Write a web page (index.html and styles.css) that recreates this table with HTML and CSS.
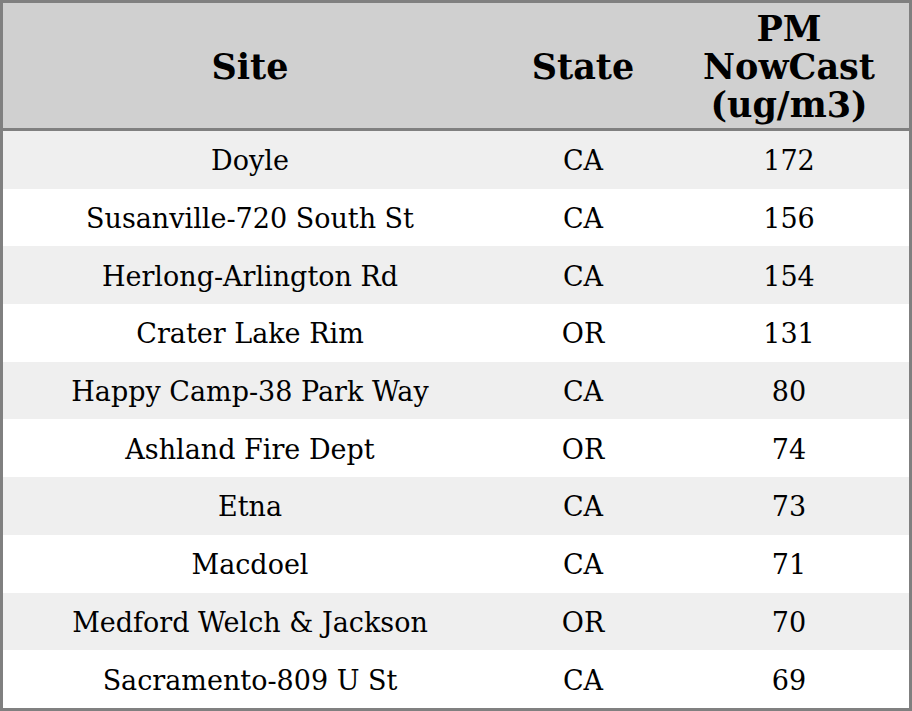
FILE: index.html
```html
<!DOCTYPE html>
<html>
<head>
<meta charset="utf-8">
<link rel="stylesheet" href="styles.css">
</head>
<body>
<table class="data">
  <colgroup>
    <col class="c-site">
    <col class="c-state">
    <col class="c-pm">
  </colgroup>
  <thead>
    <tr><th>Site</th><th>State</th><th>PM<br>NowCast<br>(ug/m3)</th></tr>
  </thead>
  <tbody>
    <tr><td>Doyle</td><td>CA</td><td>172</td></tr>
    <tr><td>Susanville-720 South St</td><td>CA</td><td>156</td></tr>
    <tr><td>Herlong-Arlington Rd</td><td>CA</td><td>154</td></tr>
    <tr><td>Crater Lake Rim</td><td>OR</td><td>131</td></tr>
    <tr><td>Happy Camp-38 Park Way</td><td>CA</td><td>80</td></tr>
    <tr><td>Ashland Fire Dept</td><td>OR</td><td>74</td></tr>
    <tr><td>Etna</td><td>CA</td><td>73</td></tr>
    <tr><td>Macdoel</td><td>CA</td><td>71</td></tr>
    <tr><td>Medford Welch &amp; Jackson</td><td>OR</td><td>70</td></tr>
    <tr><td>Sacramento-809 U St</td><td>CA</td><td>69</td></tr>
  </tbody>
</table>
</body>
</html>
```
FILE: styles.css
```css
html, body {
  margin: 0;
  padding: 0;
  background: #ffffff;
}
.data {
  width: 912px;
  height: 711px;
  border-collapse: separate;
  border-spacing: 0;
  border: 3px solid #808080;
  box-sizing: border-box;
  table-layout: fixed;
  font-family: "DejaVu Serif", serif;
  color: #000;
}
.c-site { width: 494px; }
.c-state { width: 172px; }
.c-pm { width: 240px; }
.data th {
  background: #d0d0d0;
  font-size: 35px;
  font-weight: bold;
  line-height: 38px;
  height: 128px;
  padding: 2px 0 0 0;
  border-bottom: 3px solid #808080;
  text-align: center;
  vertical-align: middle;
  box-sizing: border-box;
}
.data td {
  font-size: 27px;
  height: 57.7px;
  padding: 2px 0 0 0;
  text-align: center;
  vertical-align: middle;
  box-sizing: border-box;
}
.data tbody tr:nth-child(odd) td {
  background: #efefef;
}
```
